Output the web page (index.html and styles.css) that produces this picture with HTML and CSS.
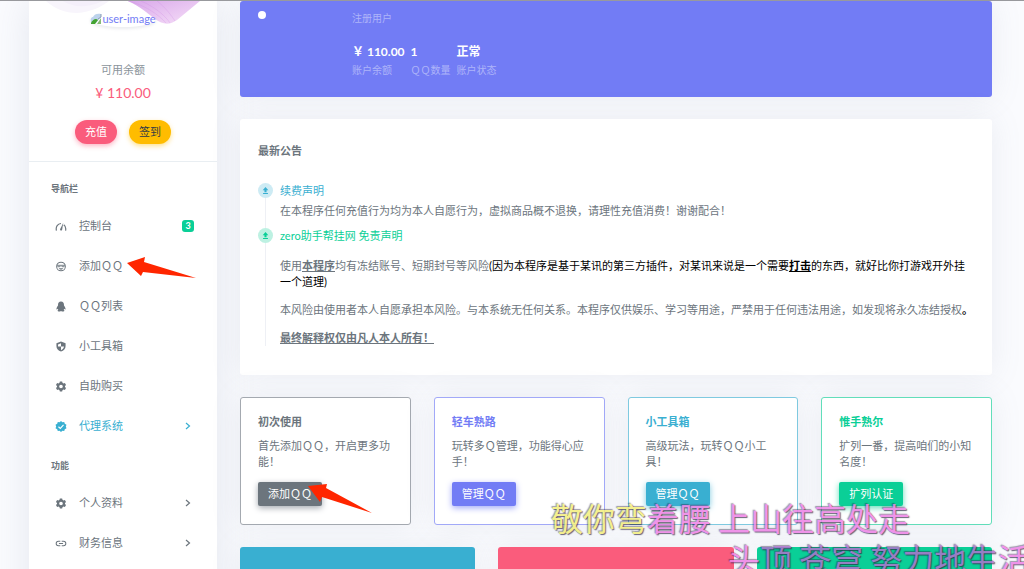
FILE: index.html
```html
<!DOCTYPE html>
<html lang="zh-CN">
<head>
<meta charset="utf-8">
<meta name="viewport" content="width=device-width, initial-scale=1">
<title>控制台</title>
<link rel="stylesheet" href="styles.css">
</head>
<body>
<div class="layout">
  <aside class="sidebar">
    <div class="profile">
      <svg class="swirl" viewBox="0 0 188 26" aria-hidden="true">
        <defs>
          <linearGradient id="sw" x1="0" y1="0" x2="1" y2="1"><stop offset="0" stop-color="#d9a8ea"/><stop offset="1" stop-color="#f6dff8"/></linearGradient>
        </defs>
        <path d="M17 0C26 8 36 12 48 12C62 11 72 6 80 0Z" fill="#f8f5fc"/>
        <path d="M34 0C44 6 56 8 74 0Z" fill="#f4effa"/>
        <path d="M99 0C112 6 118 12 126 18C134 24 141 24 148 19L171 0Z" fill="url(#sw)"/>
        <path d="M99 0C116 4 130 14 137 22M112 0C124 5 136 14 141 22M128 0C136 6 142 14 146 20" fill="none" stroke="#cf8fe4" stroke-opacity=".3"/>
      </svg>
      <a class="avatar" href="#">
        <svg width="12" height="12" viewBox="0 0 12 12" aria-hidden="true"><path d="M1 8C0 5 2 4 3 4C4 1 8 0 11 1V4L6 10H1Z" fill="#bdd3ec"/><path d="M1 10C3 6 6 5 8 7L5 11H1Z" fill="#43a331"/><path d="M11 5V11H7Z" fill="#87b977"/><path d="M11 1V4L8 6" fill="none" stroke="#8b9bb5"/></svg><span>user-image</span>
      </a>
      <span class="balance-label">可用余额</span>
      <span class="balance">¥ 110.00</span>
      <div class="profile-actions">
        <button class="pill pill-danger" type="button">充值</button>
        <button class="pill pill-warning" type="button">签到</button>
      </div>
    </div>
    <nav class="nav">
      <h2 class="nav-title">导航栏</h2>
      <a class="nav-item" href="#">
        <svg class="icon" viewBox="0 0 24 24"><path d="M2 21C0 12 5 6 12 5.500M18 8C22 11 23 16 22 21" fill="none" stroke="currentColor" stroke-width="2.600"/><path d="M17 4L14.500 19C13.500 22 9.500 21 10 18Z" fill="currentColor"/></svg>
        <span class="nav-text">控制台</span><span class="badge">3</span>
      </a>
      <a class="nav-item" href="#">
        <svg class="icon" viewBox="0 0 24 24"><circle cx="12" cy="12" r="9.500" fill="none" stroke="currentColor" stroke-width="2.200"/><path d="M3 8H21L20 12C18 15 14 14 12 11C10 14 6 15 4 12Z" fill="currentColor" opacity=".75"/><path d="M7 16H17C15 20 9 20 7 16Z" fill="currentColor"/></svg>
        <span class="nav-text">添加ＱＱ</span>
        <svg class="arrow arrow-nav" viewBox="0 0 70 22" aria-hidden="true"><path d="M0 6L18 0L17 5L69 21L16 15L14 19Z" fill="#ff2600"/></svg>
      </a>
      <a class="nav-item" href="#">
        <svg class="icon" viewBox="0 0 24 24"><path d="M12 1C7.500 1 5.500 4 5.500 8V10C4 12 2 15 2 18C2 19 3.500 19 5 17L6 19C4 20 4 23 7 23C9 23 11 23 12 22C13 23 15 23 17 23C20 23 20 20 18 19L19 17C20.500 19 22 19 22 18C22 15 20 12 18.500 10V8C18.500 4 16.500 1 12 1Z" fill="currentColor"/></svg>
        <span class="nav-text">ＱＱ列表</span>
      </a>
      <a class="nav-item" href="#">
        <svg class="icon" viewBox="0 0 24 24"><path d="M12 1L2 5V11C2 17 6 21.500 12 23C18 21.500 22 17 22 11V5Z" fill="currentColor"/><path d="M12 5L5.500 7.500V12H12ZM12 12H18.500C18 16 15.500 18.500 12 20Z" fill="#fff"/></svg>
        <span class="nav-text">小工具箱</span>
      </a>
      <a class="nav-item" href="#">
        <svg class="icon" viewBox="0 0 24 24"><path fill-rule="evenodd" d="M9.500 1H14.500L15.200 4L17.500 5.400L20.500 4.500L23 8.800L20.700 11V13L23 15.200L20.500 19.500L17.500 18.600L15.200 20L14.500 23H9.500L8.800 20L6.500 18.600L3.500 19.500L1 15.200L3.300 13V11L1 8.800L3.500 4.500L6.500 5.400L8.800 4ZM12 8A4 4 0 1 0 12 16A4 4 0 1 0 12 8Z" fill="currentColor"/></svg>
        <span class="nav-text">自助购买</span>
      </a>
      <a class="nav-item active" href="#">
        <svg class="icon" viewBox="0 0 24 24"><path d="M12 0L15 2.500L19 2L20.300 5.800L24 8L22.500 12L24 16L20.300 18.200L19 22L15 21.500L12 24L9 21.500L5 22L3.700 18.200L0 16L1.500 12L0 8L3.700 5.800L5 2L9 2.500Z" fill="currentColor"/><path d="M6.500 12.500L10.500 16L17.500 8.500" fill="none" stroke="#fff" stroke-width="2.500"/></svg>
        <span class="nav-text">代理系统</span>
        <svg class="chevron" viewBox="0 0 8 8"><path d="M2 1L5.500 4L2 7" fill="none" stroke="currentColor" stroke-width="1.200"/></svg>
      </a>
      <h2 class="nav-title">功能</h2>
      <a class="nav-item" href="#">
        <svg class="icon" viewBox="0 0 24 24"><path fill-rule="evenodd" d="M9.500 1H14.500L15.200 4L17.500 5.400L20.500 4.500L23 8.800L20.700 11V13L23 15.200L20.500 19.500L17.500 18.600L15.200 20L14.500 23H9.500L8.800 20L6.500 18.600L3.500 19.500L1 15.200L3.300 13V11L1 8.800L3.500 4.500L6.500 5.400L8.800 4ZM12 8A4 4 0 1 0 12 16A4 4 0 1 0 12 8Z" fill="currentColor"/></svg>
        <span class="nav-text">个人资料</span>
        <svg class="chevron" viewBox="0 0 8 8"><path d="M2 1L5.500 4L2 7" fill="none" stroke="currentColor" stroke-width="1.200"/></svg>
      </a>
      <a class="nav-item" href="#">
        <svg class="icon" viewBox="0 0 24 24"><path d="M10.500 7H6.500A5 5 0 0 0 6.500 17H10.500M13.500 7H17.500A5 5 0 0 1 17.500 17H13.500M7.500 12H16.500" fill="none" stroke="currentColor" stroke-width="2.200"/></svg>
        <span class="nav-text">财务信息</span>
        <svg class="chevron" viewBox="0 0 8 8"><path d="M2 1L5.500 4L2 7" fill="none" stroke="currentColor" stroke-width="1.200"/></svg>
      </a>
    </nav>
  </aside>

  <main class="main">
    <section class="hero">
      <div class="hero-media"><span class="dot"></span></div>
      <div class="hero-info">
        <span class="role">注册用户</span>
        <dl class="stats">
          <div class="stat stat-money"><dd>￥ 110.00</dd><dt>账户余额</dt></div>
          <div class="stat"><dd>1</dd><dt>ＱＱ数量</dt></div>
          <div class="stat"><dd>正常</dd><dt>账户状态</dt></div>
        </dl>
      </div>
    </section>

    <section class="notice">
      <h1 class="notice-title">最新公告</h1>
      <div class="timeline">
        <article class="entry entry-info">
          <span class="marker"><svg viewBox="0 0 10 10"><path d="M5 0L9 4.500H6.500V7.500H3.500V4.500H1ZM1.500 8.500H8.500V10H1.500Z" fill="currentColor"/></svg></span>
          <div class="entry-body">
            <a class="entry-title" href="#">续费声明</a>
            <p>在本程序任何充值行为均为本人自愿行为，虚拟商品概不退换，请理性充值消费！谢谢配合！</p>
          </div>
        </article>
        <article class="entry entry-success">
          <span class="marker"><svg viewBox="0 0 10 10"><path d="M5 0L9 4.500H6.500V7.500H3.500V4.500H1ZM1.500 8.500H8.500V10H1.500Z" fill="currentColor"/></svg></span>
          <div class="entry-body spaced">
            <a class="entry-title" href="#">zero助手帮挂网 免责声明</a>
            <p>使用<b><u>本程序</u></b>均有冻结账号、短期封号等风险<span class="ink">(因为本程序是基于某讯的第三方插件，对某讯来说是一个需要<b><u>打击</u></b>的东西，就好比你打游戏开外挂一个道理)</span></p>
            <p>本风险由使用者本人自愿承担本风险。与本系统无任何关系。本程序仅供娱乐、学习等用途，严禁用于任何违法用途，如发现将永久冻结授权<b class="ink">。</b></p>
            <p><b><u>最终解释权仅由凡人本人所有！</u></b></p>
          </div>
        </article>
      </div>
    </section>

    <section class="features">
      <article class="feature secondary">
        <h3>初次使用</h3>
        <p>首先添加ＱＱ，开启更多功能！</p>
        <div class="feature-action">
          <button class="btn" type="button">添加ＱＱ</button>
          <svg class="arrow arrow-card" viewBox="0 0 65 30" aria-hidden="true"><path d="M0 2L19 0L18 4L64 29L14 13L12 18Z" fill="#ff2600"/></svg>
        </div>
      </article>
      <article class="feature primary">
        <h3>轻车熟路</h3>
        <p>玩转多Ｑ管理，功能得心应手！</p>
        <div class="feature-action"><button class="btn" type="button">管理ＱＱ</button></div>
      </article>
      <article class="feature info">
        <h3>小工具箱</h3>
        <p>高级玩法，玩转ＱＱ小工具！</p>
        <div class="feature-action"><button class="btn" type="button">管理ＱＱ</button></div>
      </article>
      <article class="feature success">
        <h3>惟手熟尔</h3>
        <p>扩列一番，提高咱们的小知名度！</p>
        <div class="feature-action"><button class="btn" type="button">扩列认证</button></div>
      </article>
    </section>

    <section class="tiles">
      <div class="tile info"></div>
      <div class="tile danger"></div>
      <div class="tile success"></div>
    </section>
  </main>
</div>

<div class="lyrics">
  <p class="lyric"><span class="sung">敬你弯</span>着腰 上山往高处走</p>
  <p class="lyric next">头<span class="dim">顶 苍穹 努力地生</span>活</p>
</div>
</body>
</html>
```
FILE: styles.css
```css
:root {
  --secondary: #6c757d;
  --primary: #727cf5;
  --info: #39afd1;
  --success: #0acf97;
  --danger: #fa5c7c;
  --warning: #ffbc00;
}

* {
  box-sizing: border-box;
}

body {
  height: 100vh;
  margin: 0;
  overflow: hidden;
  position: relative;
  border-top: 1px solid #98999d;
  background: #fafbfe;
  color: var(--secondary);
  font: 11px/16px Lato, "Noto Sans CJK SC", sans-serif;
}

h1, h2, h3, p, dl, dd {
  margin: 0;
}

a {
  color: inherit;
  text-decoration: none;
}

button {
  border: 0;
  font: inherit;
  cursor: pointer;
}

.layout {
  display: flex;
  gap: 23px;
  padding: 0 32px 0 29px;
}

.sidebar {
  flex: 0 0 188px;
  min-height: 100vh;
  background: #fff;
  box-shadow: 0 0 35px rgba(130, 140, 165, 0.18);
}

.profile {
  position: relative;
  display: flex;
  flex-direction: column;
  align-items: center;
  padding: 10px 0 17px;
  border-bottom: 1px solid #e9eef2;
}

.swirl {
  position: absolute;
  top: 0;
  left: 0;
  width: 188px;
  height: 26px;
}

.avatar {
  position: relative;
  display: flex;
  align-items: center;
  margin-bottom: 33px;
  border-radius: 50%;
  color: var(--primary);
  box-shadow: 0 2px 3px rgba(100, 110, 130, 0.12);
}

.balance-label {
  line-height: 20px;
  color: #8b949b;
}

.balance {
  margin-bottom: 14px;
  color: var(--danger);
  font-size: 14px;
  line-height: 26px;
}

.profile-actions {
  display: flex;
  gap: 12px;
}

.pill {
  height: 24px;
  padding: 0 10px;
  border-radius: 12px;
}

.pill-danger {
  background: var(--danger);
  color: #fff;
  box-shadow: 0 2px 5px rgba(250, 92, 124, 0.45);
}

.pill-warning {
  background: var(--warning);
  color: #313a46;
  box-shadow: 0 2px 5px rgba(255, 188, 0, 0.45);
}

.nav {
  padding: 7px 23px 0 22px;
}

.nav-title {
  margin: 12px 0 9px;
  font-size: 9px;
  line-height: 16px;
}

.nav-item {
  position: relative;
  display: flex;
  align-items: center;
  height: 40px;
  padding-left: 4px;
}

.nav-item.active {
  color: var(--info);
}

.icon {
  flex: none;
  width: 12px;
  height: 11px;
  margin-right: 12px;
}

.nav-text {
  flex: 1;
}

.badge {
  width: 12px;
  border-radius: 3px;
  background: var(--success);
  color: #fff;
  font-size: 9px;
  font-weight: 700;
  line-height: 12px;
  text-align: center;
}

.chevron {
  width: 8px;
  height: 8px;
  margin-right: 2px;
}

.arrow {
  position: absolute;
  pointer-events: none;
}

.arrow-nav {
  top: 11px;
  left: 76px;
  width: 70px;
  height: 22px;
}

.arrow-card {
  top: 2px;
  left: 50px;
  width: 65px;
  height: 30px;
}

.main {
  flex: 1;
  min-width: 0;
  display: flex;
  flex-direction: column;
  gap: 22px;
}

.hero,
.notice,
.feature,
.tile {
  border-radius: 3px;
  box-shadow: 0 0 30px rgba(130, 140, 165, 0.13);
}

.hero {
  display: flex;
  padding: 9px 18px 19px;
  background: var(--primary);
  color: #fff;
}

.hero-media {
  width: 94px;
}

.dot {
  display: block;
  width: 8px;
  height: 8px;
  margin-top: 1px;
  border-radius: 50%;
  background: #fff;
}

.role,
.stat dt {
  color: #aeb4f9;
  font-size: 10px;
}

.stats {
  display: flex;
  gap: 6px;
  margin-top: 16px;
}

.stat {
  display: flex;
  flex-direction: column;
}

.stat-money {
  min-width: 52px;
}

.stat dd {
  font-size: 12px;
  font-weight: 700;
  line-height: 20px;
}

.notice {
  padding: 22px 18px 29px;
  background: #fff;
}

.notice-title {
  margin-bottom: 20px;
  font-size: 11px;
  line-height: 20px;
}

.timeline {
  display: flex;
  flex-direction: column;
  gap: 7px;
  background: linear-gradient(#eef0f5, #eef0f5) 7px 10px / 1px 100% no-repeat;
}

.entry {
  display: flex;
  align-items: flex-start;
  gap: 7px;
}

.entry-info {
  --tone: var(--info);
  --tone-soft: #cdebf4;
}

.entry-success {
  --tone: var(--success);
  --tone-soft: #bdf1e2;
}

.marker {
  display: flex;
  align-items: center;
  justify-content: center;
  flex: none;
  width: 15px;
  height: 15px;
  margin-top: 2px;
  border-radius: 50%;
  background: var(--tone-soft);
  color: var(--tone);
}

.marker svg {
  width: 7px;
  height: 7px;
}

.entry-title {
  display: block;
  margin-bottom: 2px;
  color: var(--tone);
  line-height: 20px;
}

.spaced {
  display: flex;
  flex-direction: column;
  gap: 12px;
}

.spaced .entry-title {
  margin-bottom: 0;
}

.ink {
  color: #000;
}

.features {
  display: grid;
  grid-template-columns: repeat(4, 1fr);
  gap: 23px;
}

.secondary {
  --tone: var(--secondary);
  --line: #a4a9b0;
}

.primary {
  --tone: var(--primary);
  --line: #a2a9f8;
}

.info {
  --tone: var(--info);
  --line: #7fcae0;
}

.success {
  --tone: var(--success);
  --line: #62deba;
}

.danger {
  --tone: var(--danger);
}

.feature {
  padding: 15px 17px 18px;
  border: 1px solid var(--line);
  background: #fff;
}

.feature h3 {
  margin-bottom: 7px;
  color: var(--tone);
  font-size: 11px;
  line-height: 18px;
}

.feature-action {
  position: relative;
  display: flex;
  margin-top: 12px;
}

.btn {
  height: 24px;
  padding: 0 10px;
  border-radius: 2px;
  background: var(--tone);
  color: #fff;
  box-shadow: 0 2px 6px var(--line);
}

.tiles {
  display: grid;
  grid-template-columns: repeat(3, 1fr);
  gap: 23px;
}

.tile {
  height: 100px;
  background: var(--tone);
}

.lyrics {
  position: absolute;
  top: 496px;
  left: 551px;
  color: #ee82e6;
  font: 32px/41px "Noto Sans CJK SC", sans-serif;
  white-space: nowrap;
  text-shadow: 1px 1px 1px rgba(40, 30, 60, 0.8), -1px -1px 1px rgba(40, 30, 60, 0.5);
  opacity: 0.85;
  pointer-events: none;
}

.sung {
  color: #f3ee7c;
}

.next {
  padding-left: 177px;
}

.dim {
  color: #b070cc;
}
```
